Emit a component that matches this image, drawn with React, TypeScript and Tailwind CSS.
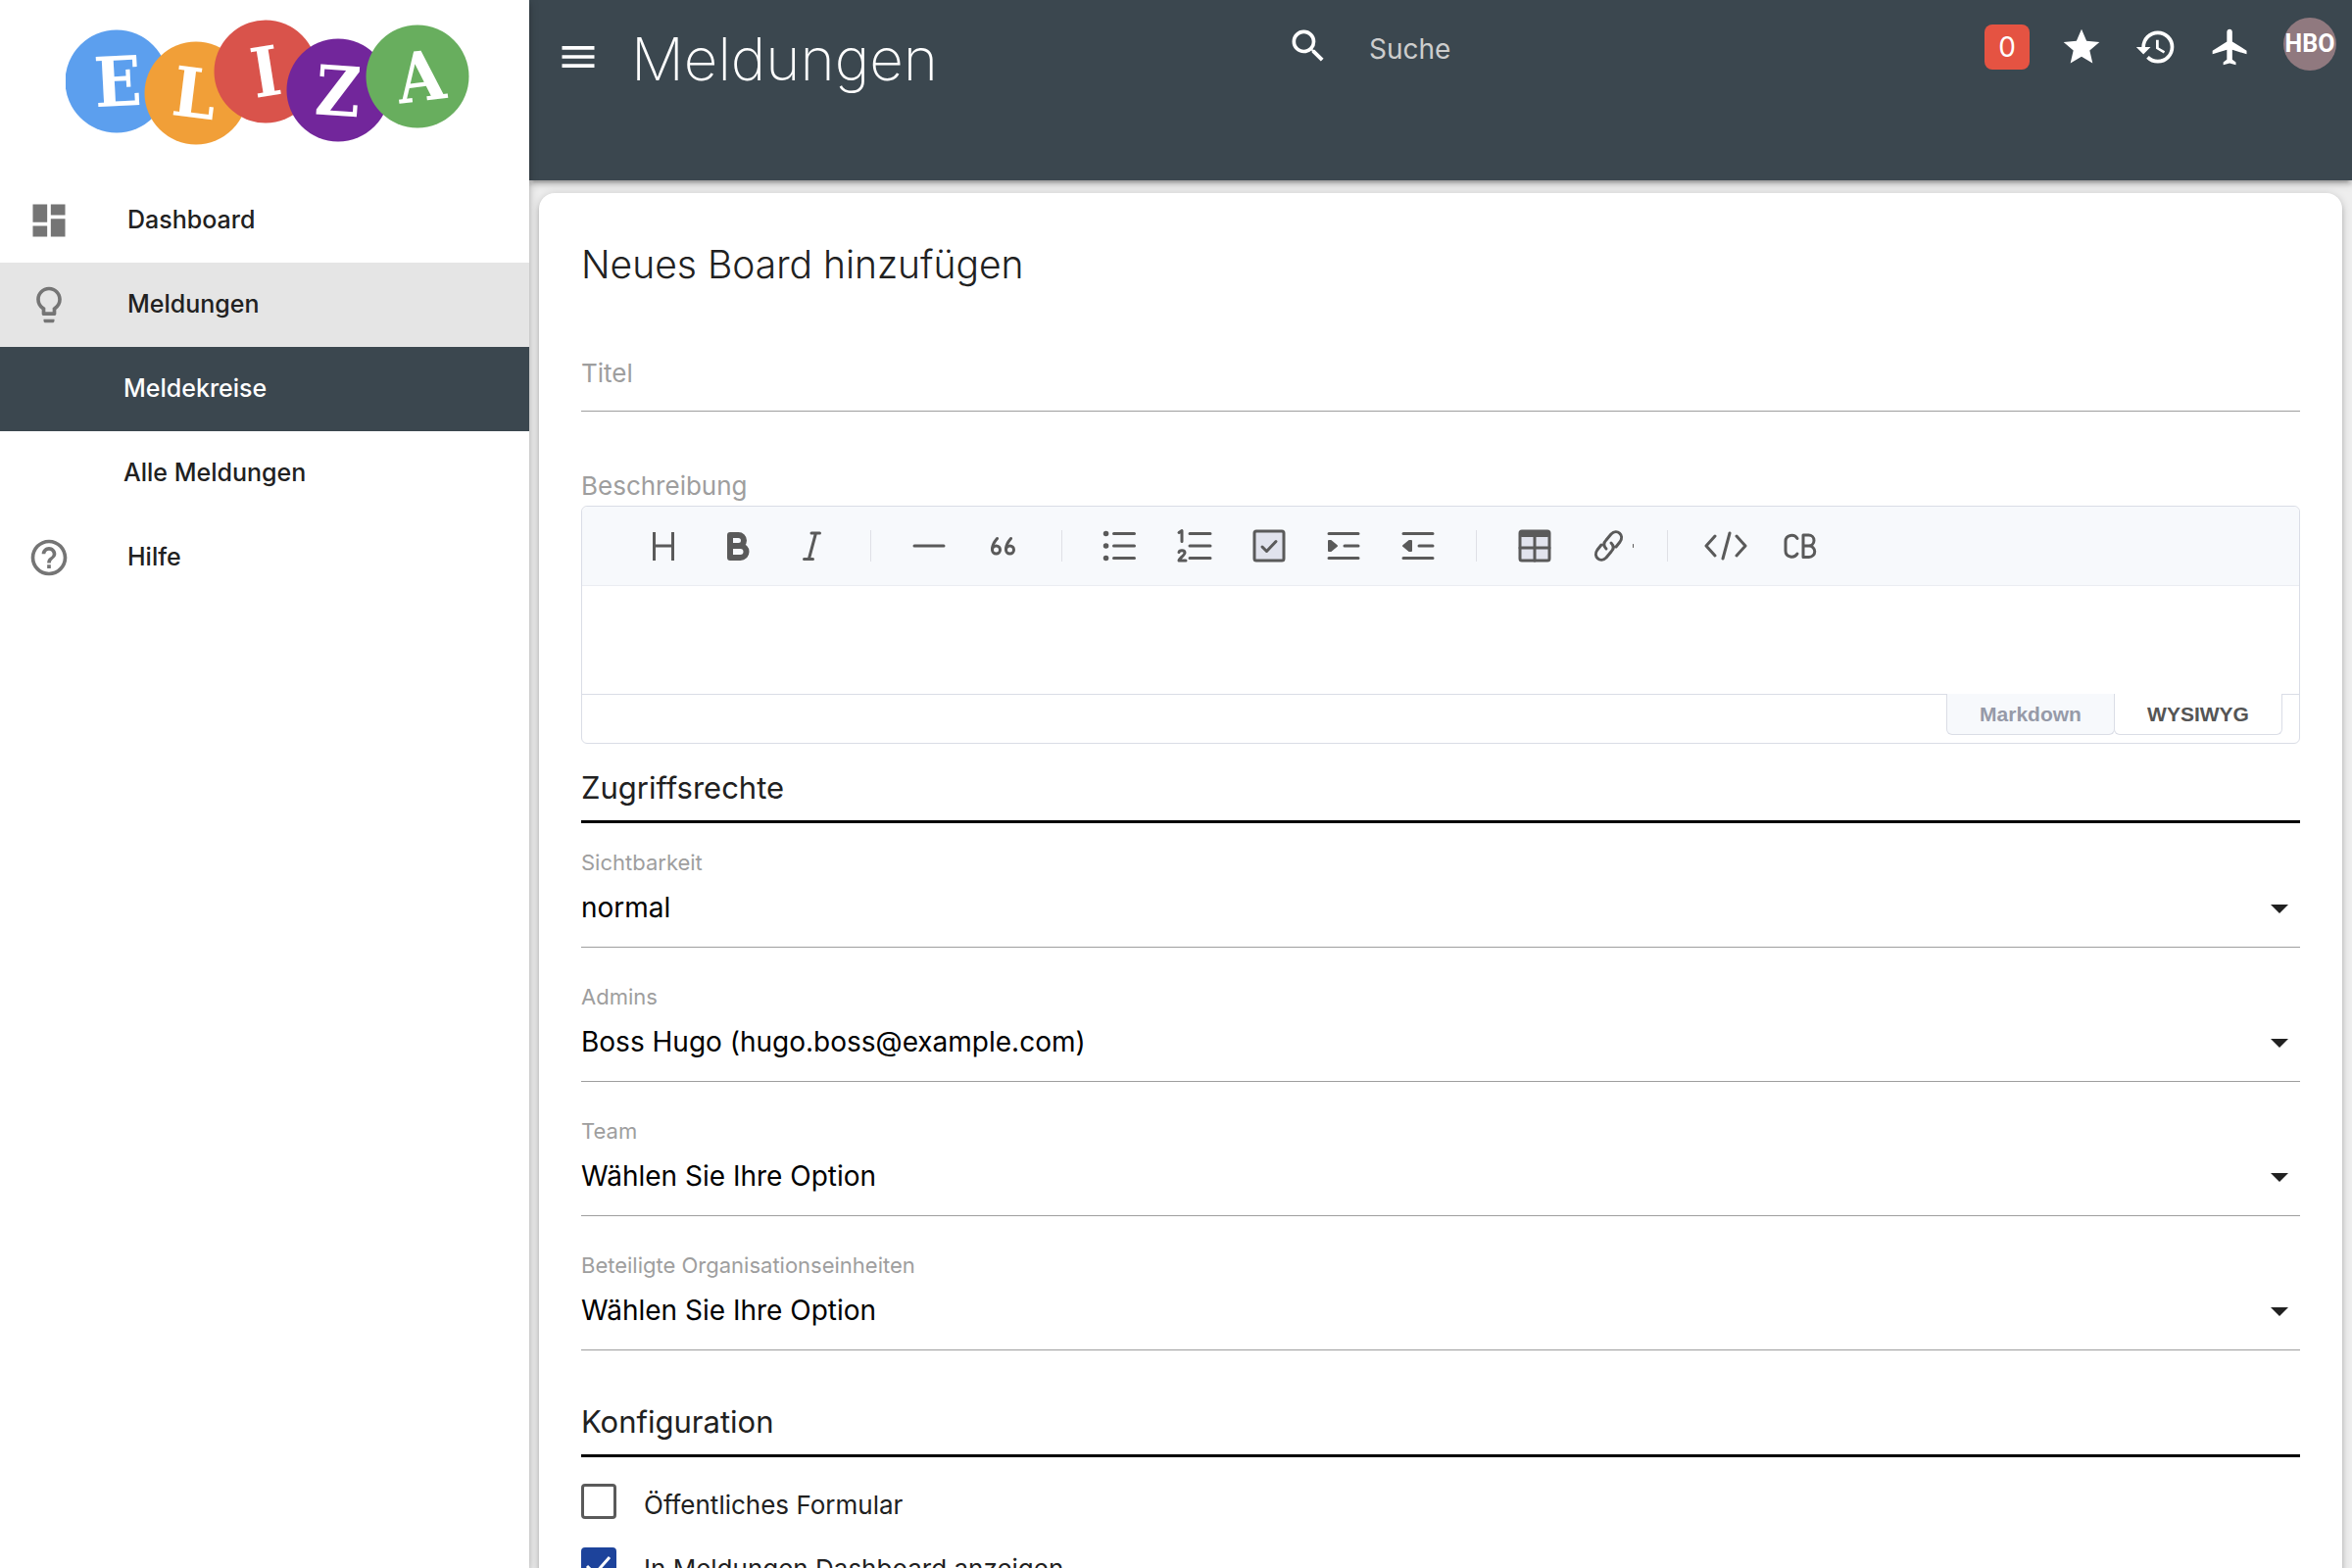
import { useState } from 'react'
import type { ReactNode } from 'react'
import {
    MdDashboard,
    MdFlight,
    MdHelpOutline,
    MdHistory,
    MdLightbulbOutline,
    MdMenu,
    MdSearch,
    MdStar
} from 'react-icons/md'

const LOGO = [
    { letter: 'E', x: 52, y: 63, tx: 53, ty: 62, rotate: -3, fill: '#5c9fee' },
    { letter: 'L', x: 133, y: 75, tx: 132, ty: 74, rotate: 7, fill: '#f19f38' },
    { letter: 'I', x: 204, y: 53, tx: 204, ty: 52, rotate: -9, fill: '#d9534b' },
    { letter: 'Z', x: 278, y: 72, tx: 278, ty: 72, rotate: 4, fill: '#72269b' },
    { letter: 'A', x: 359, y: 58, tx: 362, ty: 57, rotate: -7, fill: '#68ae5e' }
]

function Logo() {
    return (
        <svg viewBox="0 0 412 129" className="w-[412px] h-[129px]" role="img" aria-label="ELIZA">
            {LOGO.map(l => (
                <g key={l.letter}>
                    <circle cx={l.x} cy={l.y} r="52.5" fill={l.fill} />
                    <text
                        x={l.tx}
                        y={l.ty + 26}
                        textAnchor="middle"
                        transform={`rotate(${l.rotate} ${l.tx} ${l.ty})`}
                        fill="#fff"
                        fontSize="70"
                        fontWeight="700"
                        fontFamily="'DejaVu Serif Condensed', 'DejaVu Serif', serif"
                    >
                        {l.letter}
                    </text>
                </g>
            ))}
        </svg>
    )
}

interface NavItemProps {
    label: string
    icon?: ReactNode
    className?: string
}

function NavItem({ label, icon, className = 'text-[#212121]' }: NavItemProps) {
    return (
        <li>
            <a href="#" className={`flex items-center h-[86px] pl-7 text-[25px] font-medium ${className}`}>
                {icon ? <span className="w-[102px] text-[44px] text-[#757575]">{icon}</span> : <span className="w-[98px]" />}
                {label}
            </a>
        </li>
    )
}

function Sidebar() {
    return (
        <aside className="relative z-20 w-[540px] shrink-0 bg-white shadow-[0_4px_4px_0_rgba(0,0,0,0.14),0_6px_2px_-4px_rgba(0,0,0,0.12),0_2px_10px_0_rgba(0,0,0,0.2)]">
            <div className="h-[182px] pt-5 pl-[67px]">
                <Logo />
            </div>
            <nav>
                <ul>
                    <NavItem label="Dashboard" icon={<MdDashboard />} />
                    <NavItem label="Meldungen" icon={<MdLightbulbOutline />} className="bg-[#e5e5e5] text-[#212121]" />
                    <NavItem label="Meldekreise" className="bg-[#3b474f] text-white" />
                    <NavItem label="Alle Meldungen" />
                    <NavItem label="Hilfe" icon={<MdHelpOutline />} />
                </ul>
            </nav>
        </aside>
    )
}

function Header() {
    return (
        <header className="relative z-10 flex h-[184px] items-start bg-[#3b474f] text-white shadow-[0_4px_4px_0_rgba(0,0,0,0.14),0_6px_2px_-4px_rgba(0,0,0,0.12),0_2px_10px_0_rgba(0,0,0,0.2)]">
            <div className="flex flex-1 items-start pl-7">
                <button type="button" aria-label="Menü" className="mt-9 text-[44px]"><MdMenu /></button>
                <h1 className="ml-8 mt-5 text-[60px] leading-[80px] font-extralight">Meldungen</h1>
            </div>
            <div className="flex flex-1 items-start pt-[25px] pl-12">
                <label htmlFor="search" aria-label="Suche" className="text-[44px]"><MdSearch /></label>
                <input
                    id="search"
                    type="search"
                    placeholder="Suche"
                    className="ml-10 w-[400px] text-[28px] leading-[50px] outline-none placeholder:text-[#cdcdcd]"
                />
            </div>
            <div className="flex h-24 items-center text-[44px]">
                <div className="flex w-[76px] justify-center">
                    <button type="button" className="size-[46px] rounded-lg bg-[#e55342] text-[28px] leading-[46px]">0</button>
                </div>
                <button type="button" aria-label="Favoriten" className="flex w-[76px] justify-center"><MdStar /></button>
                <button type="button" aria-label="Verlauf" className="flex w-[76px] justify-center"><MdHistory /></button>
                <button type="button" aria-label="Reisen" className="flex w-[76px] justify-center"><MdFlight /></button>
                <div className="flex w-[86px] justify-center pb-1.5">
                    <button type="button" className="flex size-[54px] items-center justify-center rounded-full bg-[#90797f] font-['Liberation_Sans_Narrow',Roboto,sans-serif] text-[25px] font-bold">
                        HBO
                    </button>
                </div>
            </div>
        </header>
    )
}

function ToolbarIcon({ label, children }: { label: string; children: ReactNode }) {
    return (
        <button type="button" aria-label={label} className="flex w-[76px] justify-center">
            <svg
                viewBox="0 0 48 48"
                className="size-12 overflow-visible"
                fill="none"
                stroke="#5a5a5a"
                strokeWidth="3"
                strokeLinecap="round"
                strokeLinejoin="round"
            >
                {children}
            </svg>
        </button>
    )
}

function Divider() {
    return <span className="mx-[21px] h-8 w-px bg-[#dfe0e6]" />
}

function Toolbar() {
    return (
        <div className="flex h-[81px] items-center rounded-t-md border-b border-[#ebedf2] bg-[#f7f9fc] pl-[45px]">
            <ToolbarIcon label="Überschrift">
                <path strokeLinecap="butt" d="M14.5 10v29M33.5 10v29M14 24h20" />
            </ToolbarIcon>
            <ToolbarIcon label="Fett">
                <path strokeWidth="6" d="M16 13h8.500a5.500 5.500 0 0 1 0 11H16zM16 24h10.500a6 6 0 0 1 0 12H16z" />
            </ToolbarIcon>
            <ToolbarIcon label="Kursiv">
                <path d="M23 11h8.500M15.500 37.500h9M27.500 11l-7 26" />
            </ToolbarIcon>
            <Divider />
            <ToolbarIcon label="Linie">
                <path d="M9 24h30" />
            </ToolbarIcon>
            <ToolbarIcon label="Zitat">
                <circle cx="16.5" cy="28" r="4" />
                <path d="M12.5 27c0-4 2-7 5-10.500M26.500 27c0-4 2-7 5-10.500" />
                <circle cx="30.5" cy="28" r="4" />
            </ToolbarIcon>
            <Divider />
            <ToolbarIcon label="Liste">
                <path d="M17.500 11.500h21M17.500 24h21M17.500 36.500h21" />
                <path strokeWidth="5.500" d="M9.500 11.500h.1M9.500 24h.1M9.500 36.500h.1" />
            </ToolbarIcon>
            <ToolbarIcon label="Nummerierte Liste">
                <path d="M19 11.500h21M19 24h21M19 36.500h21M8 10.500l3-2v11M8 30.500c.5-2.500 6-2.500 6 .5 0 2.500-6 6-6 8h7" />
            </ToolbarIcon>
            <ToolbarIcon label="Aufgabe">
                <rect x="9" y="9" width="30" height="30" rx="2" fill="#e1e3ed" />
                <path d="M17 25l4.500 4.500 9.500-10" />
            </ToolbarIcon>
            <ToolbarIcon label="Einrücken">
                <path d="M9 11.500h30M25 24h14M9 36.500h30" />
                <path fill="#5a5a5a" strokeWidth="2" d="M9 19h2l6 5-6 5h-2z" />
            </ToolbarIcon>
            <ToolbarIcon label="Ausrücken">
                <path d="M9 11.500h30M25 24h14M9 36.500h30" />
                <path fill="#5a5a5a" strokeWidth="2" d="M17 19h-2l-6 5 6 5h2z" />
            </ToolbarIcon>
            <Divider />
            <ToolbarIcon label="Tabelle">
                <rect x="9" y="9" width="30" height="30" rx="2" fill="#e1e3ed" />
                <path d="M9 26h30M24 14v25" />
                <path strokeWidth="6" d="M11 12h26" />
            </ToolbarIcon>
            <ToolbarIcon label="Link">
                <path d="M21 27c-3-3-3-6 0-9l5-6c6-6 14 1 9 8l-4 5M26 21c3 3 3 6 0 9l-5 6c-6 6-14-1-9-8l4-5" />
                <path strokeWidth="1" d="M48.500 22.500v3" />
            </ToolbarIcon>
            <Divider />
            <ToolbarIcon label="Code">
                <path d="M13 14L4 24l9 10M35 14l9 10-9 10M28 11l-7 26" />
            </ToolbarIcon>
            <ToolbarIcon label="Codeblock">
                <path d="M21 16.500c-3-5-12-4-12 3v9.500c0 7 9 8 12 3M27 13h5.500a5.500 5.500 0 0 1 0 11h-5.500zM27 24h6a5.500 5.500 0 0 1 0 11.500h-6z" />
            </ToolbarIcon>
        </div>
    )
}

function Editor() {
    const [mode, setMode] = useState('WYSIWYG')

    return (
        <div className="rounded-md border border-[#dadde6]">
            <Toolbar />
            <textarea id="description" className="block h-[110px] w-full resize-none p-6 text-[25px] outline-none" />
            <div className="flex h-[50px] items-start font-['Liberation_Sans'] text-[21px] font-bold">
                <span className="flex-1 border-t border-[#dadde6]" />
                {['Markdown', 'WYSIWYG'].map(m => (
                    <button
                        key={m}
                        type="button"
                        onClick={() => setMode(m)}
                        className={`h-[42px] w-[172px] rounded-b-md border border-t-0 border-[#dadde6] last-of-type:-ml-px ${mode === m ? 'bg-white text-[#555]' : 'bg-[#f7f9fc] text-[#969aa8]'}`}
                    >
                        {m}
                    </button>
                ))}
                <span className="w-[17px] border-t border-[#dadde6]" />
            </div>
        </div>
    )
}

function SelectField({ id, label, value }: { id: string; label: string; value: string }) {
    return (
        <div className="mb-[34px]">
            <label htmlFor={id} className="block text-[22px] leading-8 text-[#9e9e9e]">{label}</label>
            <div className="relative border-b border-[#9e9e9e]">
                <select id={id} className="block h-[70px] w-full appearance-none pb-2.5 text-[28px] text-black outline-none">
                    <option>{value}</option>
                </select>
                <svg viewBox="0 0 18 9" className="pointer-events-none absolute right-3 top-[27px] h-[9px] w-[18px]" fill="#212121">
                    <path d="M0 0h18l-9 9z" />
                </svg>
            </div>
        </div>
    )
}

function Checkbox({ label, defaultChecked }: { label: string; defaultChecked?: boolean }) {
    return (
        <label className="mb-[29px] flex h-9 text-[26px] leading-[44px] text-[#212121]">
            <span className="relative mr-7 size-9">
                <input
                    type="checkbox"
                    defaultChecked={defaultChecked}
                    className="peer block size-9 appearance-none rounded-sm border-3 border-[#5a5a5a] checked:border-[#1d439b] checked:bg-[#1d439b]"
                />
                <svg viewBox="0 0 36 36" className="pointer-events-none absolute inset-0 hidden peer-checked:block" fill="none" stroke="#fff" strokeWidth="3">
                    <path d="M6 19l8 8L29 10" />
                </svg>
            </span>
            {label}
        </label>
    )
}

function SectionTitle({ children }: { children: ReactNode }) {
    return <h3 className="border-b-3 border-black text-[31px] leading-[66px] text-[#212121]">{children}</h3>
}

export default function App() {
    return (
        <div className="flex h-screen overflow-hidden bg-[#eee] font-[Inter,sans-serif]">
            <Sidebar />
            <div className="flex min-w-0 flex-1 flex-col">
                <Header />
                <main className="min-h-0 flex-1 px-2.5 pt-[13px]">
                    <form className="rounded-2xl bg-white px-[43px] pt-[47px] pb-20 shadow-[0_4px_4px_0_rgba(0,0,0,0.14),0_6px_2px_-4px_rgba(0,0,0,0.12),0_2px_10px_0_rgba(0,0,0,0.2)]">
                        <h2 className="text-[39px] leading-[52px] font-light text-[#212121]">Neues Board hinzufügen</h2>
                        <input
                            type="text"
                            aria-label="Titel"
                            placeholder="Titel"
                            className="mt-11 block h-20 w-full border-b border-[#9e9e9e] pt-0.5 text-[26px] outline-none placeholder:text-[#9e9e9e]"
                        />
                        <label htmlFor="description" className="mt-14 block text-[26px] leading-10 text-[#9e9e9e]">Beschreibung</label>
                        <Editor />
                        <div className="pt-3">
                            <SectionTitle>Zugriffsrechte</SectionTitle>
                        </div>
                        <div className="pt-6">
                            <SelectField id="visibility" label="Sichtbarkeit" value="normal" />
                            <SelectField id="admins" label="Admins" value="Boss Hugo (hugo.boss@example.com)" />
                            <SelectField id="team" label="Team" value="Wählen Sie Ihre Option" />
                            <SelectField id="units" label="Beteiligte Organisationseinheiten" value="Wählen Sie Ihre Option" />
                        </div>
                        <div className="pt-1.5">
                            <SectionTitle>Konfiguration</SectionTitle>
                        </div>
                        <div className="pt-[27px]">
                            <Checkbox label="Öffentliches Formular" />
                            <Checkbox label="In Meldungen Dashboard anzeigen" defaultChecked />
                        </div>
                    </form>
                </main>
            </div>
        </div>
    )
}
